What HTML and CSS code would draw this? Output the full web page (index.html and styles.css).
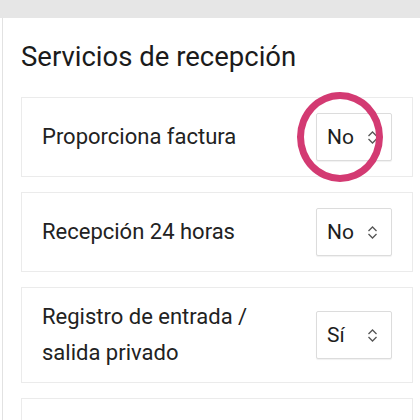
FILE: index.html
```html
<!DOCTYPE html>
<html lang="es">
<head>
  <meta charset="UTF-8">
  <meta name="viewport" content="width=device-width, initial-scale=1.0">
  <title>Servicios de recepción</title>
  <link rel="stylesheet" href="styles.css">
</head>
<body>
  <div class="topbar"></div>

  <div class="panel">
    <h2 class="section-title">Servicios de recepción</h2>

    <div class="option-card">
      <span class="option-label">Proporciona factura</span>
      <div class="select-box">
        <span>No</span>
        <svg class="chevrons" width="11" height="15" viewBox="0 0 11 15"><path d="M1.5 6 5.5 2l4 4M1.5 9l4 4 4-4" fill="none" stroke="#555" stroke-width="1.3"/></svg>
      </div>
      <div class="highlight-ring"></div>
    </div>

    <div class="option-card">
      <span class="option-label">Recepción 24 horas</span>
      <div class="select-box">
        <span>No</span>
        <svg class="chevrons" width="11" height="15" viewBox="0 0 11 15"><path d="M1.5 6 5.5 2l4 4M1.5 9l4 4 4-4" fill="none" stroke="#555" stroke-width="1.3"/></svg>
      </div>
    </div>

    <div class="option-card tall">
      <span class="option-label">Registro de entrada /<br>salida privado</span>
      <div class="select-box">
        <span>Sí</span>
        <svg class="chevrons" width="11" height="15" viewBox="0 0 11 15"><path d="M1.5 6 5.5 2l4 4M1.5 9l4 4 4-4" fill="none" stroke="#555" stroke-width="1.3"/></svg>
      </div>
    </div>

    <div class="option-card"></div>
  </div>
</body>
</html>
```

FILE: styles.css
```css
* {
  margin: 0;
  padding: 0;
  box-sizing: border-box;
}

body {
  background: #fff;
  font-family: Roboto, 'Noto Sans', sans-serif;
  color: #1b1b1b;
  overflow: hidden;
}

.topbar {
  height: 18px;
  background: #e6e6e6;
}

.panel {
  margin-left: 2px;
  border-left: 1px solid #e2e2e2;
  padding: 0 7px 0 18px;
  min-height: 402px;
}

.section-title {
  font-size: 27.5px;
  font-weight: 400;
  line-height: 32px;
  padding-top: 23px;
  margin-bottom: 24px;
}

.option-card {
  position: relative;
  display: flex;
  align-items: center;
  justify-content: space-between;
  min-height: 80px;
  padding: 15px 20px;
  border: 1px solid #ebebeb;
  margin-bottom: 15px;
}

.option-card.tall {
  padding: 11px 20px;
}

.option-label {
  font-size: 22px;
  line-height: 36px;
  color: #222;
}

.select-box {
  display: flex;
  align-items: center;
  justify-content: space-between;
  width: 76px;
  height: 48px;
  padding: 0 13px 0 10px;
  border: 1px solid #dcdcdc;
  border-radius: 2px;
  box-shadow: 0 1px 1px rgba(0,0,0,0.06);
  font-size: 21px;
  color: #1e1e1e;
  background: #fff;
}

.chevrons {
  display: block;
}

.highlight-ring {
  position: absolute;
  left: 275px;
  top: -6px;
  width: 86px;
  height: 90px;
  border: 7px solid #d33a72;
  border-radius: 50%;
}
```
